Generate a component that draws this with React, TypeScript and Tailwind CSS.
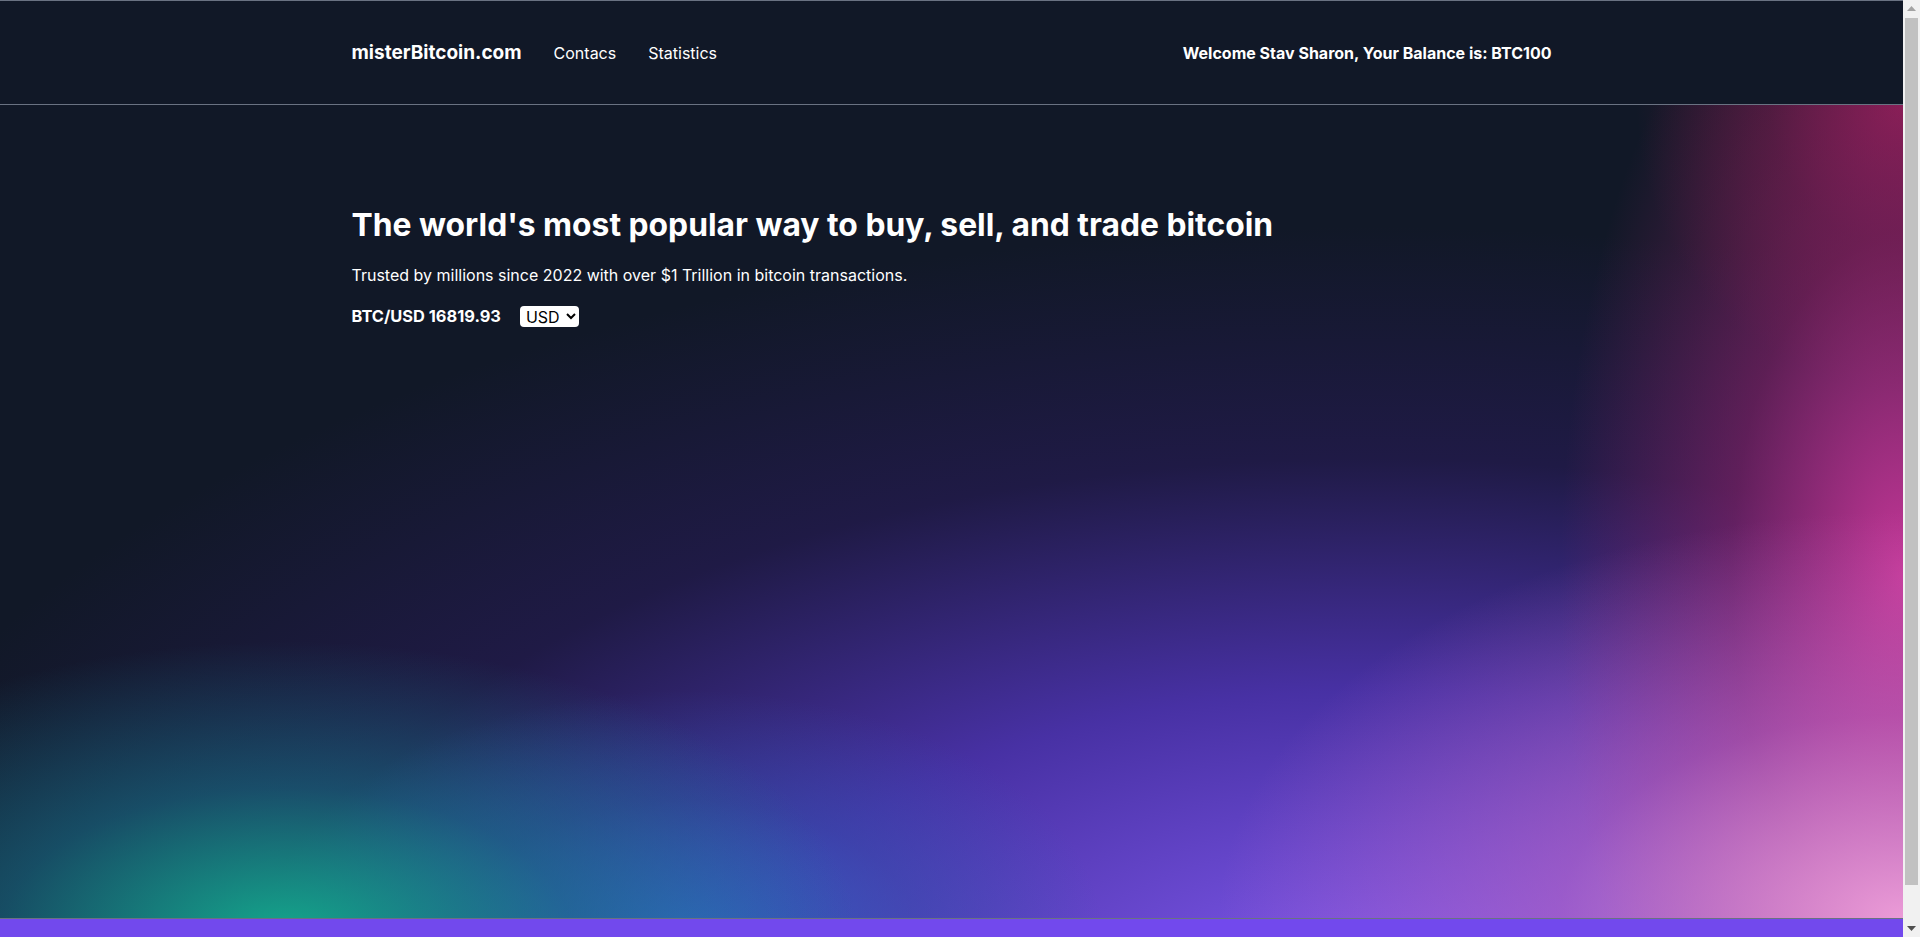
import { useState } from 'react'

const Header = () => {
  return (
    <header className="border-y border-gray-500 bg-[#111827]">
      <div className="mx-auto flex h-[103px] max-w-[1200px] items-center justify-between">
        <div className="mt-[2px] flex items-baseline gap-8">
          <a className="text-[19px] font-bold text-white" href="#">
            misterBitcoin.com
          </a>
          <nav className="flex items-baseline gap-8 text-base text-white">
            <a href="#">Contacs</a>
            <a href="#">Statistics</a>
          </nav>
        </div>
        <div className="text-base font-bold text-white">
          Welcome Stav Sharon, Your Balance is: BTC100
        </div>
      </div>
    </header>
  )
}

// browser scrollbar as seen in the screenshot
const Scrollbar = () => (
  <div className="flex h-full w-[17px] shrink-0 flex-col items-center bg-[#f1f1f1]">
    <div className="flex h-[17px] items-center justify-center">
      <svg width="9" height="5" viewBox="0 0 9 5">
        <path d="M4.5 0L9 5H0z" fill="#a3a3a3" />
      </svg>
    </div>
    <div className="my-px w-[13px] flex-1 bg-[#c1c1c1]" />
    <div className="h-[34px]" />
    <div className="flex h-[17px] items-center justify-center">
      <svg width="9" height="5" viewBox="0 0 9 5">
        <path d="M0 0H9L4.5 5z" fill="#505050" />
      </svg>
    </div>
  </div>
)

export default function App() {
  const [currency, setCurrency] = useState('USD')

  return (
    <div className="flex h-screen overflow-hidden font-['Inter',sans-serif]">
      <div className="flex-1 overflow-y-auto bg-[#111827]">
        <Header />

        {/* Hero */}
        <section className="h-[813px] bg-[#111827] bg-[radial-gradient(ellipse_30%_36%_at_15%_102%,rgba(20,168,140,1),rgba(22,120,140,0.55)_50%,transparent),radial-gradient(ellipse_22%_30%_at_36%_102%,rgba(50,105,200,0.9),rgba(45,90,180,0.4)_55%,transparent),radial-gradient(ellipse_36%_50%_at_100%_100%,rgba(235,155,215,1),rgba(205,110,200,0.5)_50%,transparent),radial-gradient(ellipse_18%_85%_at_100%_58%,rgba(195,55,150,1),rgba(150,35,110,0.55)_50%,transparent),radial-gradient(ellipse_14%_35%_at_100%_0%,rgba(130,28,75,1),rgba(100,25,60,0.5)_50%,transparent),radial-gradient(ellipse_82%_95%_at_72%_110%,rgba(130,90,240,1),rgba(85,55,195,0.8)_40%,rgba(45,28,100,0.5)_70%,transparent)]">
          <div className="mx-auto max-w-[1200px] pt-[100px] text-white">
            <h1 className="text-[31.8px] leading-10 font-bold">
              The world's most popular way to buy, sell, and trade bitcoin
            </h1>
            <p className="mt-[18px] text-base leading-6">
              Trusted by millions since 2022 with over $1 Trillion in bitcoin transactions.
            </p>
            <div className="mt-[17px] flex items-center gap-[19px]">
              <span className="text-[16.4px] font-bold">BTC/USD 16819.93</span>
              <select
                value={currency}
                onChange={(e) => setCurrency(e.target.value)}
                className="h-[21px] w-[59px] rounded bg-white px-0.5 text-base leading-5 text-black"
              >
                <option>USD</option>
                <option>EUR</option>
                <option>ILS</option>
              </select>
            </div>
          </div>
        </section>

        <footer className="h-24 border-t border-gray-500 bg-[#7249ed]" />
      </div>
      <Scrollbar />
    </div>
  )
}
